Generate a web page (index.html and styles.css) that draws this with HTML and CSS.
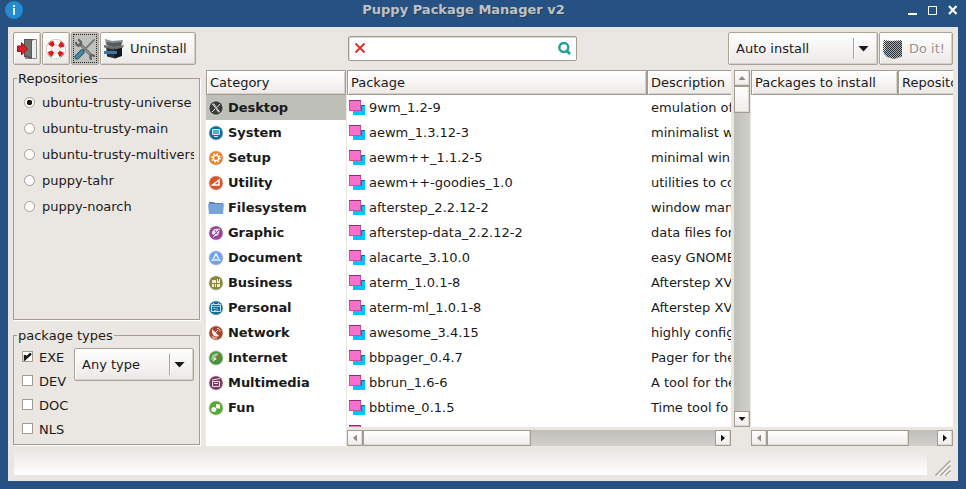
FILE: index.html
```
<!DOCTYPE html>
<html lang="en">
<head>
<meta charset="utf-8">
<title>Puppy Package Manager v2</title>
<link rel="stylesheet" href="styles.css">
</head>
<body>
<svg class="defs" width="0" height="0">
  <symbol id="pkg" viewBox="0 0 16 16"><path fill="#00c4ff" d="M4 5h12v10H4z"/><path fill="#2457a0" d="M12 5h4v1h-4z"/><path fill="#4a5aa0" d="M4 11h9V5h-1v6H4z"/><path fill="#fa71cd" d="M0 0h12v11H0z"/><path fill="#8e2c72" d="M0 0h12v1H0z"/><path fill="none" stroke="#c6529f" d="M.5 1v9.500h11V1"/></symbol>
  <symbol id="box" viewBox="0 0 20 20"><path fill="#8b8e8f" d="M1 0l7 2 11-1-1 5-8 2-8-2z"/><path fill="#55595b" d="M3 3l6 1 8-1v4l-7 1-7-2z"/><path fill="#2b2e31" d="M2 7l9 2v10.500l-8-2z"/><path fill="#16191c" d="M11 9l7-2v10l-7 2.500z"/><path fill="#686c6e" d="M0 6l11 2-1 2.500-10-2zM11 8l9-2-1 2.500-8 2z"/><path fill="#3679a8" d="M0 12h13v3H0z"/></symbol>
  <pattern id="check" width="2" height="2" patternUnits="userSpaceOnUse"><path fill="#2c3034" d="M0 0h1v1H0zM1 1h1v1H1z"/></pattern>
</svg>
<header class="titlebar">
  <svg class="info" viewBox="0 0 18 18"><circle cx="9" cy="9" r="9" fill="#238cd2"/><path fill="#e6f1f8" d="M8 4h2v2H8zM8 7h2v7H8z"/></svg>
  <h1>Puppy Package Manager v2</h1>
  <svg class="controls" viewBox="0 0 50 10" fill="none" stroke="#fff"><path stroke-width="2" d="M0 9h9"/><path d="M20.500 1.500h8v8h-8zM20 1.500h9"/><path stroke-width="2.200" d="M41 1l7.500 8M48.500 1l-7.500 8"/></svg>
</header>
<div class="client">
  <div class="toolbar">
    <button class="btn icon"><svg width="20" height="20" viewBox="0 0 20 20"><path fill="#eee" stroke="#888" d="M8.500.5h11v19h-11z"/><path fill="#565656" d="M7 0h10l-2 2v18l-8-2z"/><path fill="#717171" d="M8 1h6v17l-6-2z"/><path fill="#d82028" stroke="#8c151b" d="M.5 7h4V3.500L10.500 10l-6 6v-3.500h-4z"/></svg></button>
    <button class="btn icon"><svg width="20" height="20" viewBox="0 0 20 20" fill="none"><circle cx="10" cy="10" r="7" stroke="#b5b0a8" stroke-width="6"/><circle cx="10" cy="10" r="7" stroke="#fff" stroke-width="5"/><circle cx="10" cy="10" r="9.300" stroke="#a08a70" stroke-width="1" stroke-dasharray="5 9.608" stroke-dashoffset="-4.800"/><circle cx="10" cy="10" r="6.500" stroke="#e01717" stroke-width="4.600" stroke-dasharray="4.400 5.810" stroke-dashoffset="-2.900"/></svg></button>
    <button class="btn icon active"><svg width="22" height="22" viewBox="0 0 22 22" fill="none" stroke-linecap="round"><path stroke="#606466" stroke-width="3" d="M6 6l11 11"/><path stroke="#909494" stroke-width="1.500" d="M6 6l11 11"/><path stroke="#606466" stroke-width="2.300" d="M2 5c1 4 6 3 5-1L5 2M20 18c-2-2-5 0-3 3"/><path stroke="#777b7c" stroke-width="1.800" d="M20 2L9 13"/><path stroke="#244b62" stroke-width="5" d="M8 14l-5 5"/><path stroke="#4389ad" stroke-width="3.200" d="M8 14l-5 5"/></svg></button>
    <button class="btn uninstall"><svg width="20" height="20"><use href="#box"/></svg>Uninstall</button>
    <div class="search">
      <svg width="10" height="10" viewBox="0 0 10 10"><path stroke="#dc322b" stroke-width="2" d="M.5 .5l9 9M9.500 .5l-9 9"/></svg>
      <svg width="13" height="13" viewBox="0 0 13 13" fill="none" stroke="#289f96"><circle cx="5.800" cy="5.500" r="4.500" stroke-width="2.400"/><path stroke-width="3" d="M8 8l4 4"/></svg>
    </div>
    <div class="btn combo install"><span>Auto install</span><i></i><b></b></div>
    <button class="btn doit"><svg width="20" height="20"><path fill="#a9adb0" d="M2 2h17v16l-8 2-8-2z"/><path fill="#8fb2c9" d="M1 12h12v4H1z"/><path fill="url(#check)" d="M1 1l7 1 11-1v16l-8 3-8-3-3-5V5z"/></svg>Do it!</button>
  </div>

  <main>
    <aside>
      <fieldset class="repos"><legend>Repositories</legend>
        <div class="radios">
          <label><i class="radio on"></i>ubuntu-trusty-universe</label>
          <label><i class="radio"></i>ubuntu-trusty-main</label>
          <label><i class="radio"></i>ubuntu-trusty-multivers</label>
          <label><i class="radio"></i>puppy-tahr</label>
          <label><i class="radio"></i>puppy-noarch</label>
        </div>
      </fieldset>
      <fieldset class="types"><legend>package types</legend>
        <div class="checks">
          <label><i class="check"><svg width="9" height="9" viewBox="0 0 9 9"><path fill="none" stroke="#1a1a1a" stroke-width="2.400" d="M2 3v4L8 1.500"/></svg></i>EXE</label>
          <label><i class="check"></i>DEV</label>
          <label><i class="check"></i>DOC</label>
          <label><i class="check"></i>NLS</label>
        </div>
        <div class="btn combo any"><span>Any type</span><i></i><b></b></div>
      </fieldset>
    </aside>

    <section class="categories">
      <div class="head">Category</div>
      <ul>
        <li class="selected"><svg viewBox="0 0 16 16"><circle class="rim" cx="8" cy="8" r="7.500"/><circle cx="8" cy="8" r="6.700" fill="#3c3c3c"/><path fill="none" stroke="#ddd" d="M4.500 4l6 8h1L6 4zM12 4l-3 3.500M7 9l-3 3"/></svg>Desktop</li>
        <li><svg viewBox="0 0 16 16"><circle class="rim" cx="8" cy="8" r="7.500"/><circle cx="8" cy="8" r="6.700" fill="#0e6da0"/><path fill="#5aa9ce" stroke="#d5e8f1" d="M4.500 4.500h7v5h-7zM6 11.500h4"/></svg>System</li>
        <li><svg viewBox="0 0 16 16"><circle class="rim" cx="8" cy="8" r="7.500"/><circle cx="8" cy="8" r="6.700" fill="#e88420"/><circle cx="8" cy="8" r="3.800" fill="none" stroke="#fff" stroke-dasharray="1.500 1.484" stroke-width="2"/><circle cx="8" cy="8" r="2.700" fill="none" stroke="#fff" stroke-width="1.300"/></svg>Setup</li>
        <li><svg viewBox="0 0 16 16"><circle class="rim" cx="8" cy="8" r="7.500"/><circle cx="8" cy="8" r="6.700" fill="#dc5429"/><path fill="none" stroke="#fff" stroke-width="1.500" d="M4.500 10L11 5v5z"/></svg>Utility</li>
        <li><svg viewBox="0 0 16 16"><path fill="#5683bb" d="M1 2h5l1 1h8v10H1z"/><path fill="#78a5d9" d="M0 4h16l-1 10H1z"/></svg>Filesystem</li>
        <li><svg viewBox="0 0 16 16"><circle class="rim" cx="8" cy="8" r="7.500"/><circle cx="8" cy="8" r="6.700" fill="#96439a"/><path fill="#eee1ef" d="M4 7c1-3 4-4 7-3l1-1-1 4c0 3-2 4-4 4l-2 2 1-3-2-1z"/><path stroke="#96439a" d="M5 11l6-6M7 5l2 4"/></svg>Graphic</li>
        <li><svg viewBox="0 0 16 16"><circle class="rim" cx="8" cy="8" r="7.500"/><circle cx="8" cy="8" r="6.700" fill="#6fa2ed"/><path fill="none" stroke="#eaf2ff" stroke-width="1.500" d="M4 11l4-7 4 7M6 11c1-2 3-2 4 0"/></svg>Document</li>
        <li><svg viewBox="0 0 16 16"><circle class="rim" cx="8" cy="8" r="7.500"/><circle cx="8" cy="8" r="6.700" fill="#8b8738"/><path fill="#eeecd8" d="M4 5h4v3H4zM9 4h3v4H9zM4 9h4v3H4zM9 9h3v3H9z"/><path stroke="#8b8738" d="M6.500 9v3M10.500 4v2"/></svg>Business</li>
        <li><svg viewBox="0 0 16 16"><circle class="rim" cx="8" cy="8" r="7.500"/><circle cx="8" cy="8" r="6.700" fill="#156f98"/><path fill="none" stroke="#c2dfea" d="M3.500 4.500h9v7h-9zM5.500 3v2M10.500 3v2"/><path stroke="#8fc0d4" d="M4 6.500h8M5 8.500h2.500M9 8v3M6 10.500h2"/></svg>Personal</li>
        <li><svg viewBox="0 0 16 16"><circle class="rim" cx="8" cy="8" r="7.500"/><circle cx="8" cy="8" r="6.700" fill="#a8422c"/><path fill="#f6ece9" d="M4 4l7 7c-4 2-8-1-7-7z"/><path fill="none" stroke="#f6ece9" d="M7 8l3-3M9 3.500c2 0 3 1 3 3M5 11v2h4"/></svg>Network</li>
        <li><svg viewBox="0 0 16 16"><circle class="rim" cx="8" cy="8" r="7.500"/><circle cx="8" cy="8" r="6.700" fill="#459638"/><path fill="#9ccc8a" d="M4 5l4-2 3 1-4 5-4 1z"/><path fill="#dfe8dc" d="M4 12l3-5 2 2z"/><path fill="#d34b33" d="M12 4L7 7l2 2z"/></svg>Internet</li>
        <li><svg viewBox="0 0 16 16"><circle class="rim" cx="8" cy="8" r="7.500"/><circle cx="8" cy="8" r="6.700" fill="#7a3a5c"/><path fill="none" stroke="#eadce4" d="M4.500 6.500h7v5h-7zM4 5l8-1.500M6 8.500h4"/></svg>Multimedia</li>
        <li><svg viewBox="0 0 16 16"><circle class="rim" cx="8" cy="8" r="7.500"/><circle cx="8" cy="8" r="6.700" fill="#56a935"/><circle cx="5.800" cy="9.500" r="2.500" fill="#fff"/><path fill="#fff" d="M8 4h2l1 1 1-1v5l-2-1-1 1-1-2z"/></svg>Fun</li>
      </ul>
    </section>

    <section class="packages">
      <div class="headrow"><div class="head">Package</div><div class="head">Description</div></div>
      <div class="rows">
        <div><svg><use href="#pkg"/></svg><span>9wm_1.2-9</span><span>emulation of</span></div>
        <div><svg><use href="#pkg"/></svg><span>aewm_1.3.12-3</span><span>minimalist w</span></div>
        <div><svg><use href="#pkg"/></svg><span>aewm++_1.1.2-5</span><span>minimal win</span></div>
        <div><svg><use href="#pkg"/></svg><span>aewm++-goodies_1.0</span><span>utilities to co</span></div>
        <div><svg><use href="#pkg"/></svg><span>afterstep_2.2.12-2</span><span>window man</span></div>
        <div><svg><use href="#pkg"/></svg><span>afterstep-data_2.2.12-2</span><span>data files for</span></div>
        <div><svg><use href="#pkg"/></svg><span>alacarte_3.10.0</span><span>easy GNOME</span></div>
        <div><svg><use href="#pkg"/></svg><span>aterm_1.0.1-8</span><span>Afterstep XV</span></div>
        <div><svg><use href="#pkg"/></svg><span>aterm-ml_1.0.1-8</span><span>Afterstep XV</span></div>
        <div><svg><use href="#pkg"/></svg><span>awesome_3.4.15</span><span>highly config</span></div>
        <div><svg><use href="#pkg"/></svg><span>bbpager_0.4.7</span><span>Pager for the</span></div>
        <div><svg><use href="#pkg"/></svg><span>bbrun_1.6-6</span><span>A tool for the</span></div>
        <div><svg><use href="#pkg"/></svg><span>bbtime_0.1.5</span><span>Time tool fo</span></div>
        <div><svg><use href="#pkg"/></svg></div>
      </div>
      <div class="hscroll"><i class="sb left off"></i><i class="thumb"></i><i class="sb right"></i></div>
    </section>

    <div class="vscroll"><i class="sb up off"></i><i class="thumb"></i><i class="sb down"></i></div>

    <section class="queue">
      <div class="headrow"><div class="head">Packages to install</div><div class="head">Reposito</div></div>
      <div class="rows"></div>
      <div class="hscroll"><i class="sb left off"></i><i class="thumb"></i><i class="sb right"></i></div>
    </section>
  </main>

  <footer><div class="status"></div><svg width="16" height="16" viewBox="0 0 16 16" fill="none"><path stroke="#fff" d="M2 16L16 2M7 16l9-9M12 16l4-4"/><path stroke="#a39c90" stroke-width="1.300" d="M.5 15.500l15-15M5.500 15.500l10-10M10.500 15.500l5-5"/></svg></footer>
</div>
</body>
</html>
```
FILE: styles.css
```
* { box-sizing: border-box; }
body {
  margin: 0;
  width: 966px;
  height: 489px;
  overflow: hidden;
  background: #265283;
  color: #1a1a1a;
  font: 13px/16px "DejaVu Sans", sans-serif;
}
.defs { position: absolute; }
svg { display: block; flex: none; }

.titlebar {
  display: grid;
  grid-template-columns: 1fr auto 1fr;
  align-items: start;
  height: 27px;
  padding: 1px 8px 0 5px;
}
.titlebar h1 {
  margin: 1px 0 0;
  font-size: 13px;
  line-height: 16px;
  color: #c0c2c2;
  text-shadow: 1px 1px 0 #1d3f66;
  transform: translateX(-18px);
}
.info { width: 18px; height: 18px; }
.controls { width: 50px; height: 10px; margin-top: 4px; justify-self: end; }

.client {
  width: 950px;
  height: 454px;
  margin-left: 8px;
  padding: 5px 5px 0;
  background: #eae7e2;
}

.toolbar { display: flex; gap: 1px; height: 33px; }
.btn {
  display: flex;
  align-items: center;
  height: 33px;
  padding: 0;
  border: 1px solid #aaa295;
  border-radius: 2px;
  background: linear-gradient(#fff, #ebe9e6);
  box-shadow: inset 1px 1px #fff, inset -1px -1px #d5d0c9;
  font: inherit;
  color: inherit;
  white-space: nowrap;
}
.icon { width: 28px; justify-content: center; }
.active { background: #c2c2bd; box-shadow: none; outline: 1px dotted #222; outline-offset: -3px; }
.uninstall { width: 96px; padding-left: 3px; gap: 6px; }
.search {
  display: flex;
  align-items: center;
  justify-content: space-between;
  width: 229px;
  height: 25px;
  margin: 4px 150px 0 151px;
  padding: 0 5px 1px 6px;
  border: 1px solid #a49c8f;
  border-radius: 2px;
  background: #fff;
  box-shadow: inset 1px 1px #ddd9d3;
}
.combo span { flex: 1; padding-left: 7px; }
.combo i { width: 2px; height: 21px; border-left: 1px solid #aaa295; background: #fff; }
.combo b { width: 11px; height: 6px; margin: 0 8px 0 3px; background: #1a1a1a; clip-path: polygon(0 0, 100% 0, 50% 100%); }
.install { width: 150px; }
.any { width: 120px; }
.doit { width: 74px; padding-left: 3px; gap: 6px; color: #98938b; text-shadow: 1px 1px #fff; }

main {
  display: grid;
  grid-template-columns: 187px 147px 387px 16px 202px;
  height: 376px;
  margin-top: 5px;
}
aside { width: 187px; }
fieldset {
  margin: 0;
  min-width: 0;
  padding: 0;
  border: 1px solid #a39c90;
  box-shadow: 1px 1px #fff;
}
legend { height: 16px; margin-left: 3px; padding: 0 1px; line-height: 18px; }
label { display: flex; align-items: center; white-space: nowrap; }
.repos { height: 250px; }
.radios { padding: 4px 5px 0 10px; }
.radios label { height: 26px; gap: 7px; overflow: hidden; }
.radio {
  flex: none;
  width: 11px;
  height: 11px;
  margin-top: -2px;
  border: 1px solid #a39c90;
  border-radius: 50%;
  background: #fff;
}
.radio.on { background: radial-gradient(circle, #151515 2.4px, #fff 3px); }
.types { height: 118px; margin-top: 7px; }
.checks { float: left; width: 60px; padding: 3px 0 0 8px; }
.checks label { height: 24px; gap: 6px; }
.check { flex: none; width: 11px; height: 11px; border: 1px solid #a39c90; background: #fff; margin-top: -3px; }
.types .any { margin-top: 5px; }

main > section { display: flex; flex-direction: column; min-width: 0; overflow: hidden; background: #fff; }
.categories { margin-left: 6px; width: 140px; }
.head {
  flex: none;
  height: 25px;
  padding: 4px 0 0 3px;
  border: 1px solid #a39c90;
  background: linear-gradient(#fff, #eceae7);
  box-shadow: inset 1px 1px #fff, inset -1px -1px #d5d0c9;
  white-space: nowrap;
}
ul { list-style: none; margin: 0; padding: 0; }
li { display: flex; align-items: center; height: 25px; padding-left: 2px; gap: 4px; font-weight: bold; letter-spacing: -.05px; }
li svg { width: 16px; height: 16px; }
.rim { fill: #d5d5d5; }
.selected { background: #bfbfba; }
.headrow { display: flex; flex: none; overflow: hidden; }
.packages { width: 384px; }
.packages .head { flex: 0 0 300px; }
.rows { height: 332px; overflow: hidden; }
.rows div { display: grid; grid-template-columns: 16px 278px auto; column-gap: 4px; align-items: center; height: 25px; padding-left: 2px; white-space: nowrap; }
.rows svg { width: 16px; height: 16px; }
.queue { width: 202px; margin-left: 1px; }
.queue .head:first-child { flex: 0 0 147px; }
.queue .head:last-child { flex: 0 0 100px; }

.sb, .thumb { display: block; flex: none; border: 1px solid #a39c90; background: linear-gradient(#fff, #efedea); box-shadow: inset -1px -1px #ddd9d3; }
.sb { display: flex; align-items: center; justify-content: center; width: 16px; height: 16px; }
.sb::before { content: ""; width: 4px; height: 7px; background: #151515; }
.off::before { background: #8d8a86; }
.left::before { clip-path: polygon(100% 0, 100% 100%, 0 50%); }
.right::before { clip-path: polygon(0 0, 100% 50%, 0 100%); }
.up::before, .down::before { width: 7px; height: 4px; }
.up::before { clip-path: polygon(50% 0, 100% 100%, 0 100%); }
.down::before { clip-path: polygon(0 0, 100% 0, 50% 100%); }
.hscroll { display: flex; height: 16px; margin-top: auto; background: linear-gradient(#bfbfba, #d0cfcc); box-shadow: 0 -3px #eae7e2; }
.hscroll .thumb { width: 168px; height: 16px; }
.queue .thumb { width: 142px; }
.hscroll .right { margin-left: auto; }
.vscroll { display: flex; flex-direction: column; width: 16px; height: 357px; background: linear-gradient(90deg, #bfbfba, #d0cfcc); }
.vscroll .thumb { height: 27px; }
.vscroll .down { margin-top: auto; }

footer { display: flex; gap: 8px; margin-top: 4px; padding-left: 1px; }
.status { width: 913px; height: 25px; background: linear-gradient(#eae6e2, #fff); }
footer svg { margin-top: 10px; }
```
